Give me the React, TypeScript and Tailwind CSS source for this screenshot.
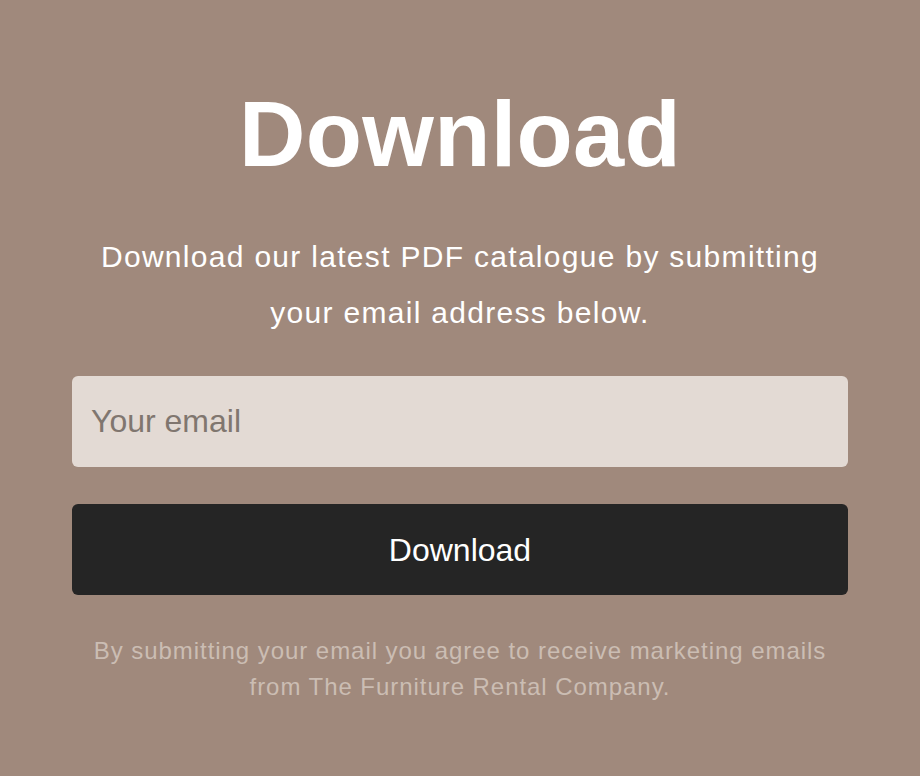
import React from "react";

export default function App() {
  return (
    <div
      className="min-h-[776px] w-full bg-[#a0897c] flex flex-col items-center px-[72px] pt-[79px]"
      style={{ fontFamily: "'Liberation Sans', Arial, sans-serif" }}
    >
      <h1 className="text-[92px] leading-[110px] font-bold text-white tracking-[0.3px]">Download</h1>
      <p className="mt-[40px] text-[30px] leading-[56px] text-white text-center max-w-[740px] tracking-[1.3px]">
        Download our latest PDF catalogue by submitting your email address below.
      </p>
      <input
        type="email"
        placeholder="Your email"
        className="mt-[35px] w-full h-[91px] rounded-[6px] bg-[#e3dad4] px-[19px] text-[32px] text-[#333] placeholder:text-[#80766f] outline-none"
      />
      <button className="mt-[37px] w-full h-[91px] rounded-[6px] bg-[#252525] text-white text-[32px]">
        Download
      </button>
      <p className="mt-[38px] text-[24px] leading-[36px] text-[#cbbdb3] text-center max-w-[760px] tracking-[0.95px]">
        By submitting your email you agree to receive marketing emails from The Furniture Rental Company.
      </p>
    </div>
  );
}
